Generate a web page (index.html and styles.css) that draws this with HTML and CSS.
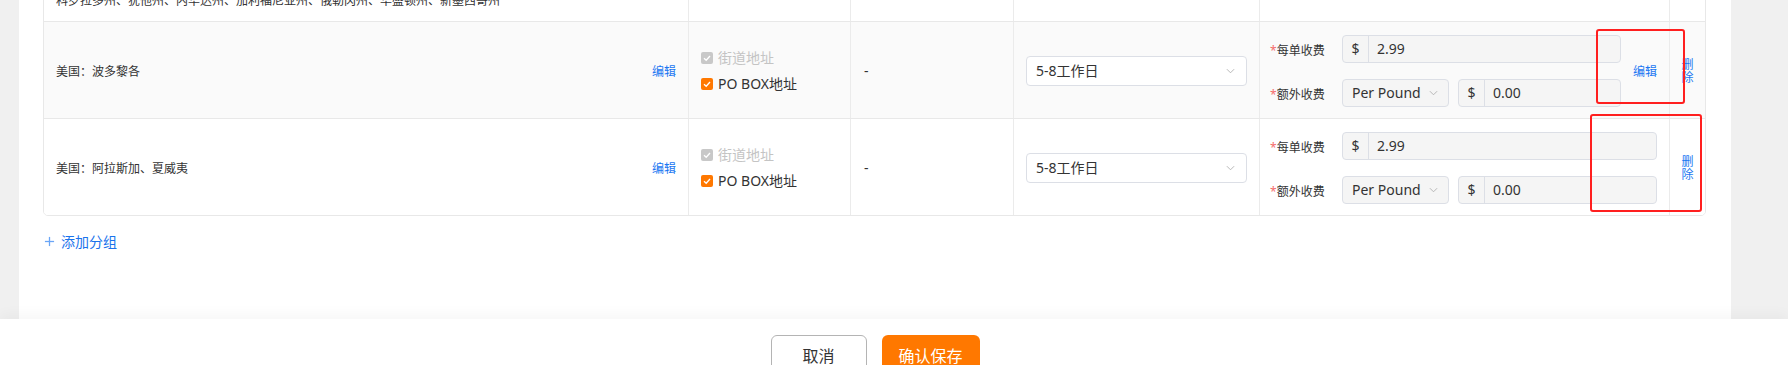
FILE: index.html
```html
<!DOCTYPE html>
<html lang="zh-CN">
<head>
    <meta charset="UTF-8">
    <meta name="viewport" content="width=device-width, initial-scale=1.0">
    <title>运费模板 - 分组</title>
    <link rel="stylesheet" href="styles.css">
</head>
<body>
    <div class="panel">
        <div class="zone-table">
            <!-- previous group, scrolled mostly out of view -->
            <div class="zone-row zone-row-top">
                <div class="cell cell-region"><span class="region-name">科罗拉多州、犹他州、内华达州、加利福尼亚州、俄勒冈州、华盛顿州、新墨西哥州</span></div>
                <div class="cell"></div>
                <div class="cell"></div>
                <div class="cell"></div>
                <div class="cell"></div>
                <div class="cell"></div>
            </div>

            <div class="zone-row is-hover">
                <div class="cell cell-region">
                    <span class="region-name">美国：波多黎各</span>
                    <a class="link">编辑</a>
                </div>
                <div class="cell cell-address">
                    <label class="check is-disabled">
                        <span class="check-box"><svg viewBox="0 0 12 12"><polyline points="3,6.2 5.2,8.3 9,4" /></svg></span>街道地址
                    </label>
                    <label class="check">
                        <span class="check-box"><svg viewBox="0 0 12 12"><polyline points="3,6.2 5.2,8.3 9,4" /></svg></span>PO BOX地址
                    </label>
                </div>
                <div class="cell cell-dash">-</div>
                <div class="cell cell-time">
                    <div class="select select-wide">
                        <span>5-8工作日</span>
                        <svg class="arrow" viewBox="0 0 10 6"><polyline points="1,1 5,5 9,1" /></svg>
                    </div>
                </div>
                <div class="cell cell-fee">
                    <div class="fee-form">
                        <div class="fee-line">
                            <span class="fee-label"><i>*</i>每单收费</span>
                            <div class="input-group"><span class="addon">$</span><span class="input-value">2.99</span></div>
                        </div>
                        <div class="fee-line">
                            <span class="fee-label"><i>*</i>额外收费</span>
                            <div class="select select-unit">
                                <span>Per Pound</span>
                                <svg class="arrow" viewBox="0 0 10 6"><polyline points="1,1 5,5 9,1" /></svg>
                            </div>
                            <div class="input-group"><span class="addon">$</span><span class="input-value">0.00</span></div>
                        </div>
                    </div>
                    <a class="link fee-edit">编辑</a>
                </div>
                <div class="cell cell-action"><a class="link link-vertical">删除</a></div>
            </div>

            <div class="zone-row">
                <div class="cell cell-region">
                    <span class="region-name">美国：阿拉斯加、夏威夷</span>
                    <a class="link">编辑</a>
                </div>
                <div class="cell cell-address">
                    <label class="check is-disabled">
                        <span class="check-box"><svg viewBox="0 0 12 12"><polyline points="3,6.2 5.2,8.3 9,4" /></svg></span>街道地址
                    </label>
                    <label class="check">
                        <span class="check-box"><svg viewBox="0 0 12 12"><polyline points="3,6.2 5.2,8.3 9,4" /></svg></span>PO BOX地址
                    </label>
                </div>
                <div class="cell cell-dash">-</div>
                <div class="cell cell-time">
                    <div class="select select-wide">
                        <span>5-8工作日</span>
                        <svg class="arrow" viewBox="0 0 10 6"><polyline points="1,1 5,5 9,1" /></svg>
                    </div>
                </div>
                <div class="cell cell-fee">
                    <div class="fee-form">
                        <div class="fee-line">
                            <span class="fee-label"><i>*</i>每单收费</span>
                            <div class="input-group"><span class="addon">$</span><span class="input-value">2.99</span></div>
                        </div>
                        <div class="fee-line">
                            <span class="fee-label"><i>*</i>额外收费</span>
                            <div class="select select-unit">
                                <span>Per Pound</span>
                                <svg class="arrow" viewBox="0 0 10 6"><polyline points="1,1 5,5 9,1" /></svg>
                            </div>
                            <div class="input-group"><span class="addon">$</span><span class="input-value">0.00</span></div>
                        </div>
                    </div>
                </div>
                <div class="cell cell-action"><a class="link link-vertical">删除</a></div>
            </div>
        </div>

        <a class="add-group">
            <svg class="plus" viewBox="0 0 12 12"><line x1="6" y1="1" x2="6" y2="11" /><line x1="1" y1="6" x2="11" y2="6" /></svg>
            添加分组
        </a>

        <!-- review annotations drawn over the table -->
        <div class="mark mark-edit"></div>
        <div class="mark mark-delete"></div>
    </div>

    <div class="footer">
        <div class="footer-inner">
            <button class="btn btn-default">取消</button>
            <button class="btn btn-primary">确认保存</button>
        </div>
    </div>
</body>
</html>
```

FILE: styles.css
```css
/* --- General --- */
body {
    margin: 0;
    background-color: #f0f0f0;
    font-family: 'Noto Sans', 'Noto Sans CJK SC', sans-serif;
    color: #333;
    font-size: 12px;
    overflow: hidden;
}

.panel {
    position: relative;
    margin: -10px 57px 0 19px;
    padding: 0 25px 68px 24px;
    background-color: #fff;
}

/* --- Zone table --- */
.zone-table {
    border: 1px solid #e8e8e8;
    border-radius: 0 0 5px 5px;
    overflow: hidden;
}

.zone-row {
    display: grid;
    grid-template-columns: 645px 162px 163px 246px 410px 1fr;
    min-height: 96px;
    border-bottom: 1px solid #e8e8e8;
    background-color: #fff;
}

.zone-row:last-child {
    border-bottom: none;
}

.zone-row.is-hover {
    background-color: #fafafa;
}

.zone-row-top {
    min-height: 30px;
}

.cell {
    display: flex;
    align-items: center;
    box-sizing: border-box;
    padding: 2px 12px 0;
    border-right: 1px solid #ebebeb;
    line-height: 18px;
}

.cell:last-child {
    border-right: none;
}

.zone-row-top .cell {
    align-items: flex-end;
    padding-top: 0;
    padding-bottom: 11px;
}

.cell-region {
    justify-content: space-between;
}

.cell-region .region-name,
.cell-region .link {
    padding-top: 2px;
}

.zone-row-top .cell-region .region-name {
    padding-top: 0;
}

.region-name {
    color: #333;
}

.link {
    color: #1a77f2;
    cursor: pointer;
}

/* --- Address checkboxes --- */
.cell-address {
    flex-direction: column;
    align-items: flex-start;
    justify-content: center;
    gap: 6px;
}

.check {
    display: flex;
    align-items: center;
    gap: 5px;
    height: 20px;
    font-size: 14px;
    color: #333;
}

.check-box {
    width: 12px;
    height: 12px;
    border-radius: 2px;
    background-color: #ff7800;
    display: flex;
}

.check-box svg {
    width: 12px;
    height: 12px;
    fill: none;
    stroke: #fff;
    stroke-width: 1.3;
}

.check.is-disabled {
    color: #c4c4c4;
}

.check.is-disabled .check-box {
    background-color: #c8c8c8;
}

.cell-dash {
    font-size: 14px;
    padding-left: 13px;
}

/* --- Selects and inputs --- */
.select {
    display: flex;
    align-items: center;
    justify-content: space-between;
    box-sizing: border-box;
    border: 1px solid #dcdfe6;
    border-radius: 4px;
    font-size: 14px;
    color: #333;
}

.arrow {
    width: 9px;
    height: 6px;
    fill: none;
    stroke: #b0b0b0;
    stroke-width: 1;
}

.select-wide {
    width: 100%;
    height: 30px;
    padding: 0 11px 0 9px;
    background-color: #fff;
}

.select-unit {
    width: 107px;
    height: 28px;
    padding: 0 10px 0 9px;
    background-color: #f5f5f5;
    flex-shrink: 0;
}

.cell-fee {
    padding-left: 10px;
}

.fee-form {
    flex: 1;
    display: flex;
    flex-direction: column;
    gap: 16px;
}

.fee-line {
    display: flex;
    align-items: center;
    gap: 9px;
}

.fee-label {
    width: 72px;
    margin-right: -9px;
    padding-top: 3px;
    flex-shrink: 0;
    color: #333;
}

.fee-label i {
    font-style: normal;
    color: #f56c6c;
}

.input-group {
    flex: 1;
    display: flex;
    height: 28px;
    box-sizing: border-box;
    border: 1px solid #dcdfe6;
    border-radius: 4px;
    background-color: #f5f5f5;
    font-size: 14px;
    line-height: 26px;
}

.addon {
    width: 25px;
    text-align: center;
    border-right: 1px solid #dcdfe6;
}

.input-value {
    padding-left: 8px;
}

.fee-edit {
    margin-left: 12px;
    padding-top: 2px;
}

/* --- Delete column --- */
.cell-action {
    justify-content: center;
    padding: 2px 0 0;
}

.link-vertical {
    width: 12px;
    line-height: 13px;
    text-align: center;
}

/* --- Add group --- */
.add-group {
    display: flex;
    align-items: center;
    gap: 6px;
    margin-top: 15px;
    height: 20px;
    width: max-content;
    padding-left: 1px;
    font-size: 14px;
    color: #1a73ec;
    cursor: pointer;
}

.plus {
    width: 11px;
    height: 11px;
    stroke: #6aa6f6;
    stroke-width: 1.4;
}

/* --- Annotation marks --- */
.mark {
    position: absolute;
    box-sizing: border-box;
    border: 2px solid #ff1f1f;
    border-radius: 3px;
}

.mark-edit {
    left: 1577px;
    top: 39px;
    width: 89px;
    height: 75px;
}

.mark-delete {
    left: 1571px;
    top: 124px;
    width: 112px;
    height: 98px;
}

/* --- Footer --- */
.footer {
    position: relative;
    z-index: 1;
    height: 60px;
    background-color: #fff;
    box-shadow: 0 -5px 12px rgba(0, 0, 0, 0.035);
}

.footer-inner {
    display: flex;
    justify-content: center;
    gap: 15px;
    margin: 0 57px 0 19px;
    padding-top: 16px;
}

.btn {
    height: 40px;
    border-radius: 6px;
    font-family: 'Noto Sans CJK SC', sans-serif;
    font-size: 16px;
    cursor: pointer;
}

.btn-default {
    width: 96px;
    border: 1px solid #b4b4b4;
    background-color: #fff;
    color: #333;
}

.btn-primary {
    width: 98px;
    border: none;
    background-color: #ff7800;
    color: #fff;
}
```
